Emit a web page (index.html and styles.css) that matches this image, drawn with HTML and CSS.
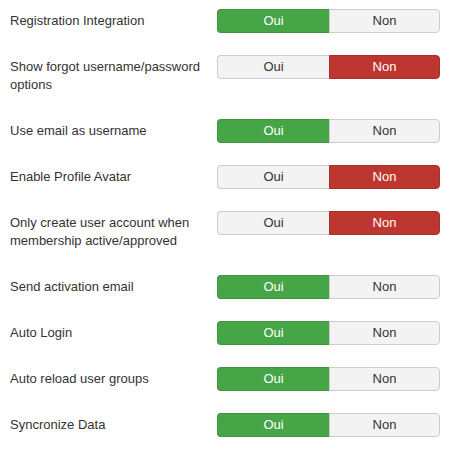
FILE: index.html
```html
<!DOCTYPE html>
<html>
<head>
<meta charset="utf-8">
<link rel="stylesheet" href="styles.css">
</head>
<body>
<div class="form">
  <div class="row">
    <div class="label">Registration Integration</div>
    <div class="toggle"><span class="opt yes active">Oui</span><span class="opt no">Non</span></div>
  </div>
  <div class="row">
    <div class="label">Show forgot username/password options</div>
    <div class="toggle"><span class="opt yes">Oui</span><span class="opt no active">Non</span></div>
  </div>
  <div class="row">
    <div class="label">Use email as username</div>
    <div class="toggle"><span class="opt yes active">Oui</span><span class="opt no">Non</span></div>
  </div>
  <div class="row">
    <div class="label">Enable Profile Avatar</div>
    <div class="toggle"><span class="opt yes">Oui</span><span class="opt no active">Non</span></div>
  </div>
  <div class="row">
    <div class="label">Only create user account when membership active/approved</div>
    <div class="toggle"><span class="opt yes">Oui</span><span class="opt no active">Non</span></div>
  </div>
  <div class="row">
    <div class="label">Send activation email</div>
    <div class="toggle"><span class="opt yes active">Oui</span><span class="opt no">Non</span></div>
  </div>
  <div class="row">
    <div class="label">Auto Login</div>
    <div class="toggle"><span class="opt yes active">Oui</span><span class="opt no">Non</span></div>
  </div>
  <div class="row">
    <div class="label">Auto reload user groups</div>
    <div class="toggle"><span class="opt yes active">Oui</span><span class="opt no">Non</span></div>
  </div>
  <div class="row">
    <div class="label">Syncronize Data</div>
    <div class="toggle"><span class="opt yes active">Oui</span><span class="opt no">Non</span></div>
  </div>
</div>
</body>
</html>
```
FILE: styles.css
```css
html, body {
  margin: 0;
  padding: 0;
  background: #ffffff;
}
body {
  font-family: "Liberation Sans", Arial, sans-serif;
  font-size: 13px;
  color: #333333;
}
.form {
  padding: 9px 0 0 10px;
}
.row {
  display: flex;
  align-items: flex-start;
  margin-bottom: 22px;
}
.label {
  width: 199px;
  padding: 3px 8px 3px 0;
  line-height: 18px;
  min-height: 18px;
}
.toggle {
  display: flex;
  width: 223px;
  height: 24px;
}
.opt {
  box-sizing: border-box;
  height: 24px;
  line-height: 22px;
  text-align: center;
  border: 1px solid #cccccc;
  background: #f3f3f3;
  color: #333333;
}
.yes {
  width: 112px;
  border-radius: 4px 0 0 4px;
  border-right: none;
}
.no {
  width: 111px;
  border-radius: 0 4px 4px 0;
}
.yes.active {
  background: #46a546;
  border-color: #3f943f;
  color: #ffffff;
}
.no.active {
  background: #bd362f;
  border-color: #a9302a;
  color: #ffffff;
}
```
